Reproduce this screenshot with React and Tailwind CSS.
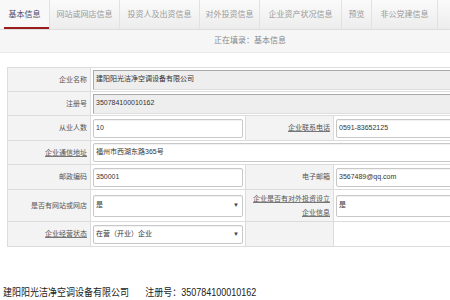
import React from "react";

const font = { fontFamily: '"Liberation Sans", "Noto Sans CJK SC", sans-serif' };

const tabs = [
  ["基本信息", "w-[50px]", true],
  ["网站或网店信息", "w-[70px]"],
  ["投资人及出资信息", "w-[80px]"],
  ["对外投资信息", "w-[60px]"],
  ["企业资产状况信息", "w-[82px]"],
  ["预览", "w-[30px]"],
  ["非公党建信息", "w-[66px]"],
];

function Input({ value, gray, select, h = "h-[19px]" }) {
  return (
    <div
      className={`${h} flex items-center justify-between px-[2px] text-[7px] text-[#333] border ${
        gray
          ? "bg-[#eeeeee] border-[#aaa] border-r-[#ddd] border-b-[#ddd]"
          : "bg-white border-[#c8c8c8] rounded-[2px] shadow-[inset_0_1px_1px_rgba(0,0,0,0.06)]"
      }`}
    >
      <span>{value}</span>
      {select && <span className="text-[6px] text-[#444] pr-[1px]">▼</span>}
    </div>
  );
}

function Label({ children, u }) {
  return (
    <td className="bg-[#f3f3f3] border border-[#dcdcdc] text-right pr-[3px] text-[7px] text-[#555] align-middle leading-[14px]">
      <span className={u ? "underline decoration-[#777]" : ""}>{children}</span>
    </td>
  );
}

function Cell({ children, span }) {
  return (
    <td colSpan={span} className="border border-[#dcdcdc] px-[2px] align-middle bg-white">
      {children}
    </td>
  );
}

export default function App() {
  return (
    <div className="w-[450px] h-[300px] overflow-hidden bg-white relative" style={font}>
      {/* tab bar */}
      <div className="h-[30px] flex bg-gradient-to-b from-[#fbfbfb] to-[#ececec] border-b border-[#dedede]">
        {tabs.map(([t, w, active]) => (
          <div
            key={t}
            className={`${w} h-full flex items-center justify-center text-[8px] border-r border-[#e2e2e2] relative ${
              active ? "text-[#4a4a6a] bg-[#f8f8f8]" : "text-[#9a9a9a]"
            }`}
          >
            {t}
            {active && <div className="absolute left-[4px] right-0 bottom-0 h-[2px] bg-[#9b1c1c]" />}
          </div>
        ))}
      </div>
      {/* status */}
      <div className="h-[23px] bg-[#f6f6f6] border-b border-[#eaeaea] flex items-center pl-[214px] text-[8px] text-[#888]">
        正在填录：基本信息
      </div>
      {/* form table */}
      <div className="pl-[7px] pt-[14px]">
        <table className="table-fixed border-collapse w-[470px]">
          <colgroup>
            <col className="w-[83px]" />
            <col className="w-[155px]" />
            <col className="w-[88px]" />
            <col className="w-[144px]" />
          </colgroup>
          <tbody>
            <tr className="h-[24px]">
              <Label>企业名称</Label>
              <Cell span={3}>
                <Input value="建阳阳光洁净空调设备有限公司" gray h="h-[20px]" />
              </Cell>
            </tr>
            <tr className="h-[24px]">
              <Label>注册号</Label>
              <Cell span={3}>
                <Input value="350784100010162" gray h="h-[20px]" />
              </Cell>
            </tr>
            <tr className="h-[25px]">
              <Label>从业人数</Label>
              <Cell>
                <Input value="10" />
              </Cell>
              <Label u>企业联系电话</Label>
              <Cell>
                <Input value="0591-83652125" />
              </Cell>
            </tr>
            <tr className="h-[24px]">
              <Label u>企业通信地址</Label>
              <Cell span={3}>
                <Input value="福州市西湖东路365号" />
              </Cell>
            </tr>
            <tr className="h-[25px]">
              <Label>邮政编码</Label>
              <Cell>
                <Input value="350001" />
              </Cell>
              <Label>电子邮箱</Label>
              <Cell>
                <Input value="3567489@qq.com" />
              </Cell>
            </tr>
            <tr className="h-[32px]">
              <Label>是否有网站或网店</Label>
              <Cell>
                <Input value="是" select h="h-[22px]" />
              </Cell>
              <Label u>
                企业是否有对外投资设立
                <br />
                企业信息
              </Label>
              <Cell>
                <Input value="是" h="h-[22px]" />
              </Cell>
            </tr>
            <tr className="h-[25px]">
              <Label u>企业经营状态</Label>
              <Cell>
                <Input value="在营（开业）企业" select />
              </Cell>
              <td className="bg-[#f3f3f3] border border-[#dcdcdc]" />
              <td className="bg-white border border-[#dcdcdc]" />
            </tr>
          </tbody>
        </table>
      </div>
      {/* bottom caption */}
      <div className="absolute left-[3px] top-[286px] flex text-[10px] text-[#222] leading-[14px] origin-left scale-x-[0.9] whitespace-nowrap">
        <span>建阳阳光洁净空调设备有限公司</span>
        <span className="ml-[18px]">注册号：350784100010162</span>
      </div>
    </div>
  );
}
